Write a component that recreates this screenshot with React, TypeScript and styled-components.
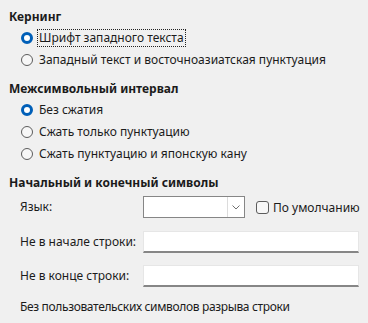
import * as React from 'react'
import styled, { createGlobalStyle, css } from 'styled-components'

const GlobalStyle = createGlobalStyle`
  html, body {
    margin: 0;
    padding: 0;
    background: #f0f0f0;
  }
  body {
    font-family: 'Noto Sans', 'Open Sans', sans-serif;
    font-size: 12px;
    color: #1b1b1b;
  }
`

const Page = styled.div`
  width: 368px;
  height: 323px;
  padding: 7px 0 0 9px;
  box-sizing: border-box;
  overflow: hidden;
`

const Section = styled.section`
  display: flex;
  flex-direction: column;
  & + & {
    margin-top: 8px;
  }
`

const Heading = styled.div`
  height: 20px;
  line-height: 20px;
  font-weight: 700;
`

const RadioRow = styled.label`
  display: flex;
  align-items: center;
  height: 22px;
  padding-left: 12px;
  gap: 4px;
`

interface IRadioMark {
  checked?: boolean
}

const RadioMark = styled.span<IRadioMark>`
  width: 12px;
  height: 12px;
  border-radius: 50%;
  box-sizing: border-box;
  flex: none;
  border: 1px solid #5c5c5c;
  background: #f7f7f7;

  ${({ checked }) =>
    checked &&
    css`
      border: 3.5px solid #005fb8;
      background: #fff;
    `}
`

interface IRadioText {
  focused?: boolean
}

const RadioText = styled.span<IRadioText>`
  padding: 0 1px;
  line-height: 16px;
  border: 1px dotted transparent;
  ${({ focused }) =>
    focused &&
    css`
      border-color: #222;
    `}
`

const Form = styled.div`
  display: grid;
  grid-template-columns: 123px 1fr;
  padding-left: 11px;
  margin-top: 3px;
  align-items: center;
`

const FieldLabel = styled.div`
  line-height: 22px;
`

const FieldRow = styled.div<{ $gap: number }>`
  display: contents;
  & > * {
    margin-top: ${({ $gap }) => $gap}px;
  }
`

const LangControls = styled.div`
  display: flex;
  align-items: center;
`

const Combo = styled.div`
  width: 102px;
  height: 22px;
  box-sizing: border-box;
  border: 1px solid #868686;
  background: #fff;
  display: flex;
  justify-content: flex-end;
`

const ComboButton = styled.div`
  width: 16px;
  height: 100%;
  border-left: 1px solid #dcdcdc;
  display: flex;
  align-items: center;
  justify-content: center;
`

const CheckLabel = styled.label`
  display: flex;
  align-items: center;
  margin-left: 11px;
  gap: 4px;
`

const CheckBox = styled.span`
  width: 13px;
  height: 13px;
  box-sizing: border-box;
  border: 1px solid #5c5c5c;
  border-radius: 3px;
  background: #f7f7f7;
`

const TextInput = styled.div`
  width: 216px;
  height: 22px;
  box-sizing: border-box;
  background: #fff;
  border: 1px solid #e6e6e6;
  border-bottom: 2px solid #868686;
`

const Note = styled.div`
  grid-column: 1 / span 2;
  line-height: 20px;
  margin-top: 10px;
  letter-spacing: -0.35px;
`

const Chevron = () => (
  <svg width="8" height="5" viewBox="0 0 8 5">
    <path d="M0.5 0.5 L4 4 L7.5 0.5" fill="none" stroke="#707070" strokeWidth="1" />
  </svg>
)

export default function App() {
  return (
    <>
      <GlobalStyle />
      <Page>
        <Section>
          <Heading>Кернинг</Heading>
          <RadioRow>
            <RadioMark checked />
            <RadioText focused>Шрифт западного текста</RadioText>
          </RadioRow>
          <RadioRow>
            <RadioMark />
            <RadioText>Западный текст и восточноазиатская пунктуация</RadioText>
          </RadioRow>
        </Section>
        <Section>
          <Heading>Межсимвольный интервал</Heading>
          <RadioRow>
            <RadioMark checked />
            <RadioText>Без сжатия</RadioText>
          </RadioRow>
          <RadioRow>
            <RadioMark />
            <RadioText>Сжать только пунктуацию</RadioText>
          </RadioRow>
          <RadioRow>
            <RadioMark />
            <RadioText>Сжать пунктуацию и японскую кану</RadioText>
          </RadioRow>
        </Section>
        <Section>
          <Heading>Начальный и конечный символы</Heading>
          <Form>
            <FieldRow $gap={0}>
              <FieldLabel>Язык:</FieldLabel>
              <LangControls>
                <Combo>
                  <ComboButton>
                    <Chevron />
                  </ComboButton>
                </Combo>
                <CheckLabel>
                  <CheckBox />
                  По умолчанию
                </CheckLabel>
              </LangControls>
            </FieldRow>
            <FieldRow $gap={13}>
              <FieldLabel>Не в начале строки:</FieldLabel>
              <TextInput />
            </FieldRow>
            <FieldRow $gap={12}>
              <FieldLabel>Не в конце строки:</FieldLabel>
              <TextInput />
            </FieldRow>
            <Note>Без пользовательских символов разрыва строки</Note>
          </Form>
        </Section>
      </Page>
    </>
  )
}
